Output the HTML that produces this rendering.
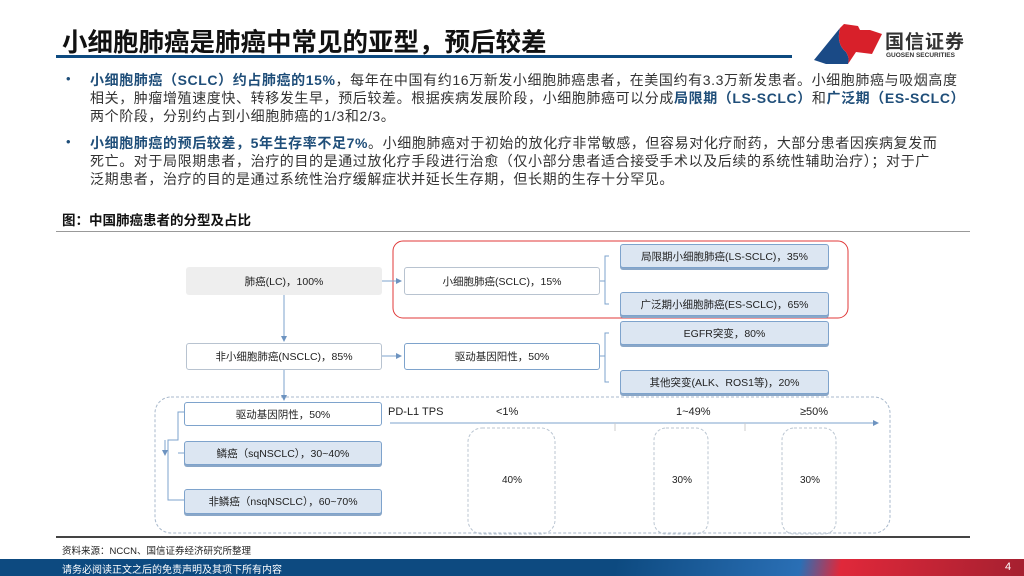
<!DOCTYPE html>
<html><head><meta charset="utf-8"><style>
*{margin:0;padding:0;box-sizing:border-box}
body{width:1024px;height:576px;position:relative;background:#fff;font-family:"Liberation Sans","Noto Sans CJK SC",sans-serif;color:#222;overflow:hidden}
.a{position:absolute}
.t{font-size:25.5px;font-weight:bold;left:62px;top:22px;color:#111;white-space:nowrap}
.p{left:90px;width:900px;font-size:14px;line-height:18px;color:#333;white-space:nowrap;letter-spacing:0.6px}
.p b{color:#1f4e79}
.dot{left:66px;font-size:13px;color:#1f4e79}
.bx{position:absolute;display:flex;align-items:center;justify-content:center;font-size:10.5px;color:#222;border-radius:3px;white-space:nowrap}
.w{background:#fff;border:1px solid #b8c3d0}
.wb{background:#fff;border:1px solid #7ea3cc}
.bl{background:#dce6f2;border:1px solid #7ea3cc;box-shadow:0 2px 0 #8aa7c8}
</style></head><body>
<div class="a t">小细胞肺癌是肺癌中常见的亚型，预后较差</div>
<div class="a" style="left:56px;top:55px;width:736px;height:3px;background:#0d4a80"></div>
<svg class="a" style="left:812px;top:22px" width="75" height="42" viewBox="0 0 75 42">
<path d="M2 38 L28 6 Q24 22 34 30 Q38 36 36 42 L14 42 Z" fill="#1a4a86"/>
<path d="M28 6 L32 2 L46 4 L48 8 L58 8 L70 12 L60 32 L44 30 Q40 36 36 42 Q38 36 34 30 Q24 22 28 6 Z" fill="#d8202a"/>
</svg>
<div class="a" style="left:885px;top:27px;font-size:19px;font-weight:bold;color:#333;letter-spacing:1px">国信证券</div>
<div class="a" style="left:886px;top:52px;font-size:6.5px;font-weight:bold;color:#333">GUOSEN SECURITIES</div>

<div class="a dot" style="top:71px">•</div>
<div class="a p" style="top:71px"><b>小细胞肺癌（SCLC）约占肺癌的15%</b>，每年在中国有约16万新发小细胞肺癌患者，在美国约有3.3万新发患者。小细胞肺癌与吸烟高度<br>相关，肿瘤增殖速度快、转移发生早，预后较差。根据疾病发展阶段，小细胞肺癌可以分成<b>局限期（LS-SCLC）</b>和<b>广泛期（ES-SCLC）</b><br>两个阶段，分别约占到小细胞肺癌的1/3和2/3。</div>
<div class="a dot" style="top:134px">•</div>
<div class="a p" style="top:134px"><b>小细胞肺癌的预后较差，5年生存率不足7%</b>。小细胞肺癌对于初始的放化疗非常敏感，但容易对化疗耐药，大部分患者因疾病复发而<br>死亡。对于局限期患者，治疗的目的是通过放化疗手段进行治愈（仅小部分患者适合接受手术以及后续的系统性辅助治疗）；对于广<br>泛期患者，治疗的目的是通过系统性治疗缓解症状并延长生存期，但长期的生存十分罕见。</div>
<div class="a" style="left:62px;top:209px;font-size:13.5px;font-weight:bold;color:#111">图：中国肺癌患者的分型及占比</div>
<div class="a" style="left:56px;top:231px;width:914px;height:1px;background:#999"></div>

<svg class="a" style="left:0;top:0" width="1024" height="576">
<defs><marker id="ar" markerWidth="6" markerHeight="6" refX="5" refY="3" orient="auto"><path d="M0 0L6 3L0 6Z" fill="#6d93c0"/></marker></defs>
<rect x="393" y="241" width="455" height="77" rx="10" fill="none" stroke="#e03a3a" stroke-width="1"/>
<rect x="155" y="397" width="735" height="136" rx="16" fill="none" stroke="#a9b9cc" stroke-dasharray="3 2"/>
<g stroke="#7ea3cc" fill="none">
<line x1="284" y1="295" x2="284" y2="341" marker-end="url(#ar)"/>
<line x1="284" y1="370" x2="284" y2="400" marker-end="url(#ar)"/>
<line x1="382" y1="281" x2="401" y2="281" marker-end="url(#ar)"/>
<line x1="382" y1="356" x2="401" y2="356" marker-end="url(#ar)"/>
<path d="M609 256 H605 V304 H609 M600 281 H605"/>
<path d="M609 333 H605 V382 H609 M600 356 H605"/>
<path d="M184 412 H178 V440 H168 V500 H184 M178 453 H184" />
<line x1="165" y1="440" x2="165" y2="455" marker-end="url(#ar)"/>
<line x1="390" y1="423" x2="878" y2="423" marker-end="url(#ar)"/>
<line x1="615" y1="423" x2="615" y2="431" stroke="#ccc"/>
<line x1="745" y1="423" x2="745" y2="431" stroke="#ccc"/>
</g>
<g fill="none" stroke="#bbc6d2" stroke-dasharray="3 2">
<rect x="468" y="428" width="87" height="106" rx="14"/>
<rect x="654" y="428" width="54" height="106" rx="12"/>
<rect x="782" y="428" width="54" height="106" rx="12"/>
</g>
</svg>
<div class="bx" style="left:186px;top:267px;width:196px;height:28px;background:#eee;border:none">肺癌(LC)，100%</div>
<div class="bx w" style="left:404px;top:267px;width:196px;height:28px">小细胞肺癌(SCLC)，15%</div>
<div class="bx bl" style="left:620px;top:244px;width:209px;height:24px">局限期小细胞肺癌(LS-SCLC)，35%</div>
<div class="bx bl" style="left:620px;top:292px;width:209px;height:24px">广泛期小细胞肺癌(ES-SCLC)，65%</div>
<div class="bx bl" style="left:620px;top:321px;width:209px;height:24px">EGFR突变，80%</div>
<div class="bx bl" style="left:620px;top:370px;width:209px;height:24px">其他突变(ALK、ROS1等)，20%</div>
<div class="bx w" style="left:186px;top:343px;width:196px;height:27px">非小细胞肺癌(NSCLC)，85%</div>
<div class="bx wb" style="left:404px;top:343px;width:196px;height:27px">驱动基因阳性，50%</div>
<div class="bx wb" style="left:184px;top:402px;width:198px;height:24px">驱动基因阴性，50%</div>
<div class="bx bl" style="left:184px;top:441px;width:198px;height:24px">鳞癌（sqNSCLC），30~40%</div>
<div class="bx bl" style="left:184px;top:489px;width:198px;height:25px">非鳞癌（nsqNSCLC），60~70%</div>
<div class="a" style="left:388px;top:406px;font-size:11px">PD-L1 TPS</div>
<div class="a" style="left:496px;top:406px;font-size:11px">&lt;1%</div>
<div class="a" style="left:676px;top:406px;font-size:11px">1~49%</div>
<div class="a" style="left:800px;top:406px;font-size:11px">≥50%</div>
<div class="a" style="left:502px;top:475px;font-size:10px">40%</div>
<div class="a" style="left:672px;top:475px;font-size:10px">30%</div>
<div class="a" style="left:800px;top:475px;font-size:10px">30%</div>

<div class="a" style="left:56px;top:536px;width:914px;height:2px;background:#444"></div>
<div class="a" style="left:62px;top:543px;font-size:9.5px">资料来源：NCCN、国信证券经济研究所整理</div>
<div class="a" style="left:0;top:559px;width:1024px;height:17px;background:linear-gradient(100deg,#0d4a80 0%,#0d4a80 60%,#2a6fb5 78%,#e0283a 82%,#a52030 100%)"></div>
<div class="a" style="left:62px;top:561px;font-size:10px;color:#fff">请务必阅读正文之后的免责声明及其项下所有内容</div>
<div class="a" style="left:1005px;top:561px;font-size:11px;color:#fff">4</div>
</body></html>
